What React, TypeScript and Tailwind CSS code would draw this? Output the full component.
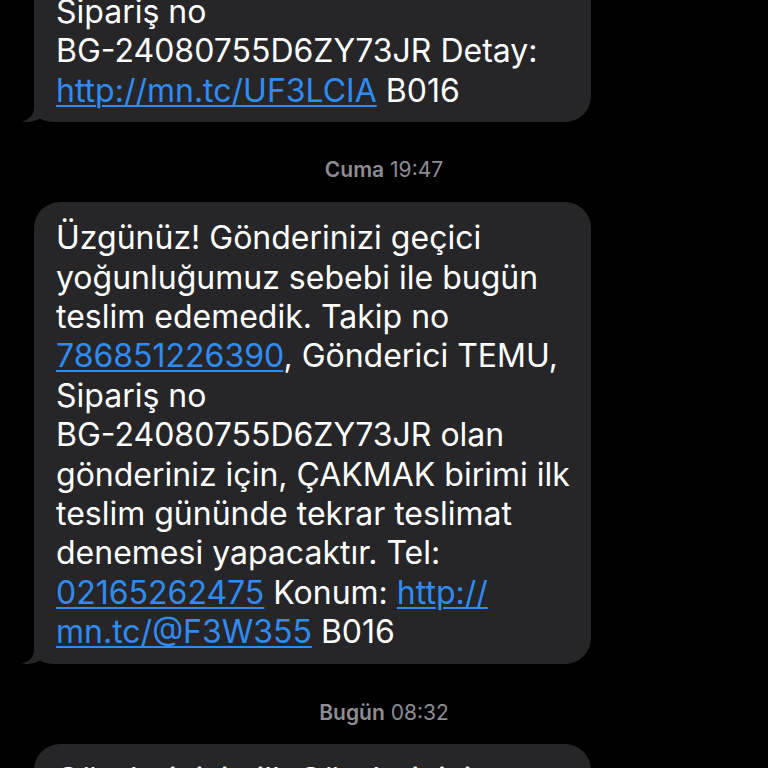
import React from 'react';

const Link: React.FC<{ children: React.ReactNode }> = ({ children }) => (
    <span className="text-[#2f8cf5] underline decoration-[1.5px] underline-offset-[3px]">{children}</span>
);

// bubble tail, drawn under the text
const Tail: React.FC = () => (
    <svg className="absolute -left-[14px] bottom-0" width="40" height="30" viewBox="0 0 40 30">
        <path d="M14 0 L14 16 C14 23 9 27.5 2 29.6 C9 30.6 15 29.2 20 26.4 C24 29 30 30 40 30 L40 0 Z" fill="#262628" />
    </svg>
);

const Bubble: React.FC<{ children: React.ReactNode; className?: string }> = ({ children, className = '' }) => (
    <div className={`relative ml-[34px] w-[557px] rounded-[26px] bg-[#262628] pl-[22px] pr-4 pt-4 pb-3 text-[32px] leading-[39.4px] text-white ${className}`}>
        <Tail />
        <div className="relative">{children}</div>
    </div>
);

const Stamp: React.FC<{ day: string; time: string; className?: string }> = ({ day, time, className = '' }) => (
    <div className={`text-center text-[21px] leading-6 text-[#8d8d93] ${className}`}>
        <span className="font-semibold">{day}</span> {time}
    </div>
);

const App: React.FC = () => {
    return (
        <div className="h-[768px] w-[768px] overflow-hidden bg-black" style={{ fontFamily: 'Inter, "Noto Sans", sans-serif' }}>
            <div className="-mt-[24px]">
                <Bubble>
                    Sipariş no<br />
                    BG-24080755D6ZY73JR Detay:<br />
                    <Link>http://mn.tc/UF3LCIA</Link> B016
                </Bubble>

                <Stamp day="Cuma" time="19:47" className="mt-9 mb-5" />

                <Bubble>
                    Üzgünüz! Gönderinizi geçici<br />
                    yoğunluğumuz sebebi ile bugün<br />
                    teslim edemedik. Takip no<br />
                    <Link>786851226390</Link>, Gönderici TEMU,<br />
                    Sipariş no<br />
                    BG-24080755D6ZY73JR olan<br />
                    gönderiniz için, ÇAKMAK birimi ilk<br />
                    teslim gününde tekrar teslimat<br />
                    denemesi yapacaktır. Tel:<br />
                    <Link>02165262475</Link> Konum: <Link>http://</Link><br />
                    <Link>mn.tc/@F3W355</Link> B016
                </Bubble>

                <Stamp day="Bugün" time="08:32" className="mt-[37px] mb-[19px]" />

                <Bubble>
                    Gönderinizin ilk Gönderinizin teslimi<br />
                    yapılamadı.
                </Bubble>
            </div>
        </div>
    );
};

export default App;
